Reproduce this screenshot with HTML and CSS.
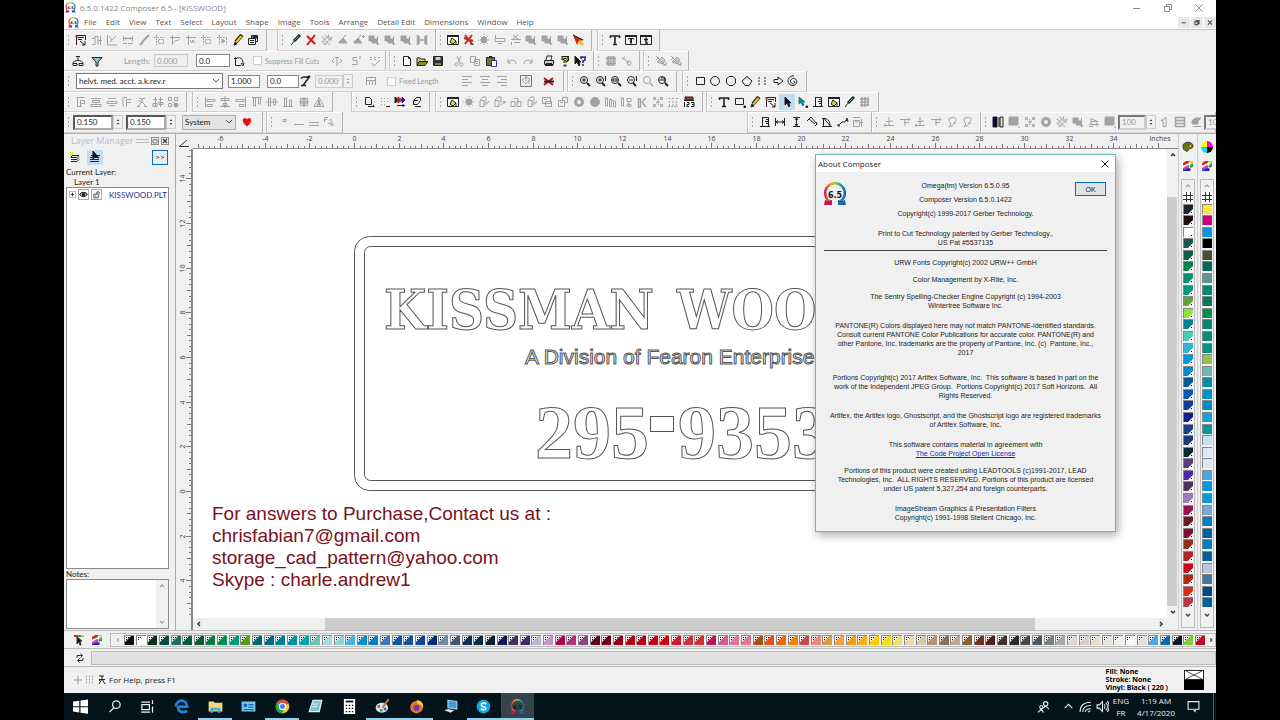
FILE: index.html
```html
<!DOCTYPE html>
<html lang="en">
<head>
    <meta charset="UTF-8">
    <meta name="viewport" content="width=device-width, initial-scale=1.0">
    <title>6.5.0.1422 Composer 6.5 - [KISSWOOD]</title>
    <link rel="stylesheet" href="styles.css">
</head>
<body>
    <svg class="defs" aria-hidden="true">
        <defs>
            <linearGradient id="rainbow" x1="0" x2="1" y1="0" y2="0">
                <stop offset="0" stop-color="#d81b60"/>
                <stop offset="0.25" stop-color="#f39c12"/>
                <stop offset="0.5" stop-color="#9ccc3c"/>
                <stop offset="0.75" stop-color="#26a69a"/>
                <stop offset="1" stop-color="#1565c0"/>
            </linearGradient>
            <symbol id="omega" viewBox="0 0 24 24">
                <path d="M7 19.500A9.800 9.800 0 1 1 17 19.500" fill="none" stroke="url(#rainbow)" stroke-width="2.500"/>
                <path d="M1 23l1-5 3 1 4-1v5z" fill="#c2185b"/>
                <path d="M23 23l-1-5-3 1-4-1v5z" fill="#1e62b0"/>
                <text x="12" y="16" text-anchor="middle" class="omega-text">6.5</text>
            </symbol>
        </defs>
    </svg>

    <div class="app">
        <header class="title-bar">
            <svg class="app-icon"><use href="#omega"/></svg>
            <span class="title">6.5.0.1422 Composer 6.5 - [KISSWOOD]</span>
            <div class="window-buttons">
                <button aria-label="Minimize" data-icon="min"></button>
                <button aria-label="Restore" data-icon="restore"></button>
                <button aria-label="Close" data-icon="close"></button>
            </div>
        </header>

        <nav class="menu-bar">
            <svg class="app-icon"><use href="#omega"/></svg>
            <button>File</button>
            <button>Edit</button>
            <button>View</button>
            <button>Text</button>
            <button>Select</button>
            <button>Layout</button>
            <button>Shape</button>
            <button>Image</button>
            <button>Tools</button>
            <button>Arrange</button>
            <button>Detail Edit</button>
            <button>Dimensions</button>
            <button>Window</button>
            <button>Help</button>
            <div class="child-buttons">
                <button aria-label="Minimize document" data-icon="min"></button>
                <button aria-label="Restore document" data-icon="restore"></button>
                <button aria-label="Close document" data-icon="close"></button>
            </div>
        </nav>

        <div class="toolbars">
            <div class="row">
                <div class="band band-select"><div class="tools" data-icons="flag -nodes -edit -dim -brush -crop -curve -wave -crop -play pencil props"></div></div>
                <div class="band band-fill gap-10"><div class="tools" data-icons="pen cross -hatch -bucket -bucket2 -stack -stack -stack -mirror"></div></div>
                <div class="band band-image"><div class="tools" data-icons="paint redx -burst -plot -plotx -stack -stack -stack wand"></div></div>
                <div class="band band-text gap-5"><div class="tools" data-icons="bigT boxT boxt"></div></div>
            </div>
            <div class="row">
                <div class="band band-length no-grip">
                    <div class="tools tools-wide" data-icons="weld funnel"></div>
                    <label class="off length-label" for="length">Length:</label>
                    <input class="field" id="length" value="0.000" disabled>
                    <input class="field" value="0.0" aria-label="Angle">
                    <div class="tools" data-icons="rotate"></div>
                    <label class="check off"><input type="checkbox"> Suppress Fill Cuts</label>
                    <div class="tools tools-wide" data-icons="-weed -snap -abc"></div>
                </div>
                <div class="band band-file gap-3"><div class="tools" data-icons="page open save | -cut -copy paste | -undo -redo | print help what"></div></div>
                <div class="band band-grid"><div class="tools" data-icons="-grid -key"></div></div>
                <div class="band band-ungroup gap-3"><div class="tools" data-icons="-hammer -hammer"></div></div>
            </div>
            <div class="row">
                <div class="band band-font">
                    <select class="font-name" aria-label="Font"><option>helvt. med. acct. a.k.rev.r</option></select>
                    <input class="field field-size" value="1.000" aria-label="Height">
                    <input class="field field-size" value="0.0" aria-label="Slant">
                    <div class="tools" data-icons="slant"></div>
                    <input class="field field-kern" value="0.000" aria-label="Kerning" disabled><span class="spin off" data-icon="spin"></span>
                    <div class="tools tools-hh" data-icons="-hh"></div>
                    <label class="check off"><input type="checkbox"> Fixed Length</label>
                    <div class="tools tools-align" data-icons="-left -center -right | -pot | redh"></div>
                </div>
                <div class="band band-zoom gap-3"><div class="tools" data-icons="zin zone zout zminus -zoom zpage"></div></div>
                <div class="band band-shape gap-5"><div class="tools" data-icons="rect circle octagon diamond dots arrow spiral"></div></div>
            </div>
            <div class="row">
                <div class="band band-order"><div class="tools" data-icons="-P -bars -bars2 -F -node3 -align2 -blocks"></div></div>
                <div class="band band-align gap-5"><div class="tools" data-icons="-alL -alC -alR -alT -alM -alB -alG -tri"></div></div>
                <div class="band band-copy gap-18"><div class="tools" data-icons="docdown -griddot rgb clock"></div></div>
                <div class="band band-effects gap-5"><div class="tools" data-icons="paint -burst -cube -cube2 -cube3 -cube -boxes -boxes2 -ring -disc -doors -doors2 -kk -net -net2 calc123"></div></div>
                <div class="band band-main gap-3"><div class="tools" data-icons="bigT rectd pencil flag *cursor tealcur ruler paint pen -gridd"></div></div>
            </div>
            <div class="row">
                <div class="band band-nudge">
                    <input class="field sunken" value="0.150" aria-label="Nudge X"><span class="spin" data-icon="spin"></span>
                    <input class="field sunken" value="0.150" aria-label="Nudge Y"><span class="spin" data-icon="spin"></span>
                    <select class="units" aria-label="Units"><option>System</option></select>
                    <div class="tools" data-icons="heart"></div>
                </div>
                <div class="band band-lines gap-3"><div class="tools" data-icons="-dot -line1 -line2 -frac"></div></div>
                <div class="band band-dim push"><div class="tools" data-icons="ruler dimh dimv dimd dima leader -dimr"></div></div>
                <div class="band band-path"><div class="tools" data-icons="-p1 -p2 -p1 -p2 -lobe -lobe"></div></div>
                <div class="band band-color">
                    <div class="tools" data-icons="grad -sq -net -ring -hatch -stack -cut2 -sq"></div>
                    <input class="field sunken field-100" value="100" aria-label="Opacity" disabled><span class="spin" data-icon="spin"></span>
                    <div class="tools" data-icons="-mirror2 -list -erase"></div>
                    <input class="field sunken field-100" value="100" aria-label="Scale" disabled>
                </div>
            </div>
        </div>

        <main class="main">
            <aside class="layer-panel">
                <div class="panel-title">
                    <span>Layer Manager</span>
                    <i class="drag-lines"></i>
                    <button aria-label="Dock" data-icon="dock"></button>
                    <button aria-label="Close panel" data-icon="closeb"></button>
                </div>
                <div class="panel-tools">
                    <button aria-label="New layer" data-icon="layers"></button>
                    <button class="active" aria-label="Select layer" data-icon="layercur"></button>
                    <button class="more">&gt;&gt;</button>
                </div>
                <div class="current-layer">Current Layer:</div>
                <div class="layer-name">Layer 1</div>
                <div class="tree">
                    <div class="tree-row">
                        <span class="plus" data-icon="plus"></span>
                        <span class="cell" data-icon="eye"></span>
                        <span class="cell" data-icon="lock"></span>
                        <span class="file">KISSWOOD.PLT</span>
                    </div>
                </div>
                <label class="notes-label" for="notes">Notes:</label>
                <div class="notes">
                    <textarea id="notes"></textarea>
                    <div class="notes-scroll"><span data-icon="up"></span><span data-icon="down"></span></div>
                </div>
            </aside>

            <section class="workspace">
                <div class="corner" data-icon="corner"></div>
                <svg class="ruler-h" id="ruler-h"></svg>
                <svg class="ruler-v" id="ruler-v"></svg>
                <div class="canvas">
                    <svg class="drawing">
                        <g class="outline">
                            <rect x="161.500" y="87.500" width="700" height="254" rx="15"/>
                            <rect x="171.500" y="97.500" width="680" height="234" rx="6"/>
                            <text class="sign-name" x="191" y="180">KISSMAN</text>
                            <text class="sign-name" x="484" y="180">WOO</text>
                            <text class="sign-sub" x="332" y="215">A Division of Fearon Enterprise</text>
                            <text class="sign-phone" x="342" y="309">295</text>
                            <rect x="457.500" y="267.500" width="23" height="15"/>
                            <text class="sign-phone" x="485" y="309">9353</text>
                        </g>
                    </svg>
                    <p class="contact">For answers to Purchase,Contact us at :<br>chrisfabian7@gmail.com<br>storage_cad_pattern@yahoo.com<br>Skype : charle.andrew1</p>
                </div>
                <div class="scroll-v"><span data-icon="up"></span><i class="thumb"></i><span data-icon="down"></span></div>
                <div class="scroll-h"><span data-icon="lt"></span><i class="thumb"></i><span data-icon="gt"></span></div>
            </section>

            <div class="palette">
                <span class="palette-icon" data-icon="palette"></span>
                <span class="palette-icon" data-icon="rainbow"></span>
                <div class="swatches-v" id="vinyl"></div>
            </div>
            <div class="palette">
                <span class="palette-icon" data-icon="cmyk"></span>
                <span class="palette-icon" data-icon="rainbow"></span>
                <div class="swatches-v plain" id="process"></div>
            </div>
        </main>

        <div class="color-bar">
            <span data-icon="tcur"></span>
            <span data-icon="rainbow"></span>
            <div class="swatches-h" id="colors"></div>
        </div>
        <div class="command-bar">
            <button aria-label="Refresh" data-icon="refresh"></button>
            <input class="command" aria-label="Command" disabled>
        </div>
        <footer class="status-bar">
            <span class="off" data-icon="cross2"></span>
            <span class="off" data-icon="dots9"></span>
            <span data-icon="man"></span>
            <span class="hint">For Help, press F1</span>
            <div class="fill-info">Fill: None<br>Stroke: None<br>Vinyl: Black ( 220 )</div>
            <div class="fill-boxes"><svg viewBox="0 0 20 10"><path d="M0 0l20 10M20 0L0 10" stroke="#222" fill="none"/></svg><i></i></div>
        </footer>

        <div class="taskbar">
            <div class="task-buttons" id="tasks"></div>
            <div class="tray">
                <span data-icon="people"></span>
                <span data-icon="caret"></span>
                <span data-icon="wifi"></span>
                <span data-icon="volume"></span>
                <div class="tray-text">ENG<br>FR</div>
                <div class="tray-text clock">1:19 AM<br>4/17/2020</div>
                <span data-icon="note"></span>
                <i class="peek"></i>
            </div>
        </div>

        <div class="dialog" role="dialog" aria-label="About Composer">
            <div class="dialog-header">
                <h2>About Composer</h2>
                <button aria-label="Close dialog" data-icon="close"></button>
            </div>
            <div class="dialog-content">
                <svg class="dialog-logo"><use href="#omega"/></svg>
                <button class="ok">OK</button>
                <p>Omega(tm) Version 6.5.0.95</p>
                <p class="sp-5">Composer Version 6.5.0.1422</p>
                <p class="sp-5">Copyright(c) 1999-2017 Gerber Technology.</p>
                <p class="sp-11">Print to Cut Technology patented by Gerber Technology.,<br>US Pat #5537135</p>
                <hr>
                <p>URW Fonts Copyright(c) 2002 URW++ GmbH</p>
                <p class="sp-8">Color Management by X-Rite, Inc.</p>
                <p class="sp-8">The Sentry Spelling-Checker Engine Copyright (c) 1994-2003<br>Wintertree Software Inc.</p>
                <p class="sp-11">PANTONE(R) Colors displayed here may not match PANTONE-identified standards.<br>Consult current PANTONE Color Publications for accurate color. PANTONE(R) and<br>other Pantone, Inc. trademarks are the property of Pantone, Inc. (c)&nbsp; Pantone, Inc.,<br>2017</p>
                <p class="sp-16">Portions Copyright(c) 2017 Artifex Software, Inc.&nbsp; This software is based in part on the<br>work of the Independent JPEG Group.&nbsp; Portions Copyright(c) 2017 Soft Horizons.&nbsp; All<br>Rights Reserved.</p>
                <p class="sp-11">Artifex, the Artifex logo, Ghostscript, and the Ghostscript logo are registered trademarks<br>of Artifex Software, Inc.</p>
                <p class="sp-11">This software contains material in agreement with</p>
                <p><a href="#">The Code Project Open License</a></p>
                <p class="sp-8">Portions of this product were created using LEADTOOLS (c)1991-2017, LEAD<br>Technologies, Inc.&nbsp; ALL RIGHTS RESERVED. Portions of this product are licensed<br>under US patent 5,327,254 and foreign counterparts.</p>
                <p class="sp-11">ImageStream Graphics &amp; Presentation Filters<br>Copyright(c) 1991-1998 Stellent Chicago, Inc.</p>
            </div>
        </div>
    </div>

    <script src="script.js"></script>
</body>
</html>
```
FILE: styles.css
```css
* {
    box-sizing: border-box;
}
body {
    margin: 0;
    background: #000;
    font-family: "Open Sans", "Noto Sans", sans-serif;
    font-size: 8px;
    line-height: 10px;
    color: #333;
}
button, input, select, textarea {
    font: inherit;
    color: inherit;
    margin: 0;
    padding: 0;
    border: 0;
    border-radius: 0;
    background: none;
}
p, h2 {
    margin: 0;
    font-weight: normal;
}
svg {
    display: block;
}
.defs {
    position: absolute;
    width: 0;
    height: 0;
}
.omega-text {
    font: bold 8px "DejaVu Sans", sans-serif;
    fill: #111;
}
.icon {
    width: 12px;
    height: 12px;
    fill: none;
    stroke: currentColor;
}
.app {
    position: relative;
    display: flex;
    flex-direction: column;
    width: 90%;
    height: 100vh;
    margin: 0 auto;
    overflow: hidden;
    background: #f0f0f0;
}
.app-icon {
    width: 11px;
    height: 11px;
}

/* title and menu */
.title-bar {
    display: flex;
    align-items: center;
    height: 15px;
    padding-left: 1px;
    gap: 4px;
    background: #fff;
    color: #888;
}
.window-buttons {
    display: flex;
    gap: 19px;
    margin-left: auto;
    padding-right: 11px;
}
.menu-bar {
    display: flex;
    align-items: center;
    height: 15px;
    padding-left: 4px;
    gap: 9px;
    background: #fff;
    border-bottom: 1px solid #c4c4c4;
    color: #555;
}
.menu-bar .app-icon {
    margin-right: -4px;
}
.child-buttons {
    display: flex;
    gap: 1px;
    margin-left: auto;
}
.child-buttons button {
    padding: 0;
    background: #e6e8ea;
}
.child-buttons .icon {
    width: 12px;
    height: 11px;
    padding: 2px;
    stroke-width: 2;
}

/* toolbars */
.row {
    display: flex;
    height: 21px;
    overflow: hidden;
}
.row:nth-child(even) {
    height: 20px;
}
.band {
    display: flex;
    flex: none;
    align-items: center;
    padding: 0 5px 0 9px;
    border-right: 1px solid #b4b4b4;
    border-bottom: 1px solid #d0d0d0;
    box-shadow: inset 1px 1px #fff;
    background: radial-gradient(circle, #aaa 1px, transparent 1px) 3px 4px / 3px 4px no-repeat,
        radial-gradient(circle, #aaa 1px, transparent 1px) 3px 8px / 3px 4px no-repeat,
        radial-gradient(circle, #aaa 1px, transparent 1px) 3px 12px / 3px 4px no-repeat;
    font-family: Lato, "Liberation Sans", sans-serif;
}
.no-grip {
    background: none;
}
.gap-3 { margin-left: 3px; border-left: 1px solid #c4c4c4; }
.gap-5 { margin-left: 5px; border-left: 1px solid #c4c4c4; }
.gap-10 { margin-left: 10px; border-left: 1px solid #c4c4c4; }
.gap-18 { margin-left: 18px; border-left: 1px solid #c4c4c4; }
.push { margin-left: auto; border-left: 1px solid #c4c4c4; }
.band-select { width: 203px; }
.band-fill { width: 159px; }
.band-image { width: 156px; }
.band-text { width: 63px; }
.band-length { width: 322px; padding-left: 4px; }
.band-file { width: 205px; }
.band-grid { width: 46px; }
.band-ungroup { width: 46px; }
.band-font { width: 500px; padding-left: 12px; }
.band-zoom { width: 110px; }
.band-shape { width: 125px; }
.band-order { width: 123px; }
.band-align { width: 141px; }
.band-copy { width: 79px; }
.band-effects { width: 268px; }
.band-main { width: 173px; }
.band-nudge { width: 199px; }
.band-lines { width: 77px; }
.band-dim { width: 125px; }
.band-path { width: 109px; }
.band-color { width: 235px; padding-right: 0; }
.tools {
    display: flex;
    flex: 1;
}
.tools button {
    display: flex;
    flex: 1;
    align-items: center;
    justify-content: center;
    height: 16px;
    min-width: 12px;
    color: #222;
}
.tools button:disabled {
    color: #a2a2a2;
}
.tools .active, .panel-tools .active {
    background: #c2dcf3;
}
.tools .space {
    width: 6px;
}
.band-length .tools, .band-font .tools, .band-nudge .tools, .band-color .tools {
    flex: none;
}
.band-color .tools button {
    width: 16px;
}
.band-length .tools-wide button {
    width: 19px;
}
.band-length .length-label {
    margin: 0 4px 0 18px;
}
.band-length .field {
    margin-right: 8px;
}
.band-length .field + .tools {
    margin: 0 8px 0 -5px;
}
.band-length .check {
    margin-right: 8px;
}
.off {
    color: #999;
}
.field {
    width: 34px;
    height: 13px;
    padding-left: 2px;
    border: 1px solid #8a8a8a;
    background: #fff;
    color: #222;
}
.field:disabled {
    border-color: #ccc;
    background: #f0f0f0;
    color: #999;
}
.check {
    display: flex;
    align-items: center;
    gap: 3px;
    font-size: 7px;
    white-space: nowrap;
}
.check input {
    appearance: none;
    width: 9px;
    height: 9px;
    border: 1px solid #ccc;
    background: #fff;
}
select {
    appearance: none;
    padding-left: 2px;
    background: #fff url("data:image/svg+xml,%3Csvg xmlns='http://www.w3.org/2000/svg' width='8' height='6'%3E%3Cpath d='M1 1l3 3 3-3' fill='none' stroke='%23555'/%3E%3C/svg%3E") no-repeat right 2px center;
}
.font-name {
    width: 147px;
    height: 16px;
    border: 1px solid #777;
    color: #222;
}
.band-font .field-size {
    width: 32px;
    margin-left: 5px;
}
.band-font .field-size + .field-size {
    margin-left: 7px;
}
.band-font .field-kern {
    width: 28px;
    margin-left: 4px;
}
.spin {
    display: flex;
    flex: none;
    align-items: center;
    justify-content: center;
    width: 10px;
    height: 14px;
    border: 1px solid #ccc;
}
.tools-hh {
    padding: 0 10px 0 12px;
}
.band-font .tools-align {
    flex: 1;
    padding-left: 20px;
}
.sunken {
    width: 40px;
    height: 15px;
    border: 2px inset #aaa;
}
.band-nudge .spin {
    margin-right: 3px;
}
.units {
    width: 54px;
    height: 15px;
    margin: 0 5px 0 3px;
    border: 1px solid #adadad;
    background-color: #e3e3e3;
    color: #222;
}
.field-100 {
    flex: none;
    width: 28px;
    border-color: #aaa;
}

/* middle part */
.main {
    display: flex;
    flex: 1;
    min-height: 0;
    border-top: 1px solid #b4b4b4;
}
.layer-panel {
    display: flex;
    flex-direction: column;
    width: 112px;
    padding: 1px 6px 1px 2px;
    font-family: Lato, "Liberation Sans", sans-serif;
    border-right: 1px solid #aaa;
    color: #222;
}
.panel-title {
    display: flex;
    align-items: center;
    height: 12px;
    padding-left: 5px;
    gap: 2px;
    font-family: "Open Sans", sans-serif;
    font-size: 9px;
    color: #b2c0d2;
    white-space: nowrap;
}
.panel-title button {
    color: #444;
}
.panel-title .icon {
    width: 8px;
    height: 8px;
}
.drag-lines {
    flex: 1;
    height: 4px;
    border: solid #bbb;
    border-width: 1px 0;
}
.panel-tools {
    display: flex;
    align-items: center;
    height: 20px;
    gap: 4px;
    padding: 0 1px;
}
.panel-tools button {
    display: flex;
    align-items: center;
    justify-content: center;
    width: 16px;
    height: 15px;
}
.panel-tools .more {
    margin-left: auto;
    border: 1px solid #0a6cc0;
    background: #e5eef5;
}
.layer-name {
    padding-left: 8px;
}
.tree {
    flex: 1;
    border: 1px solid #8c8c8c;
    background: #fff;
}
.tree-row {
    display: flex;
    align-items: center;
    gap: 1px;
    padding: 1px 2px;
}
.tree-row .plus .icon {
    width: 7px;
    height: 7px;
}
.tree-row .cell {
    margin-left: 1px;
    border: 1px solid #aaa;
}
.tree-row .cell .icon {
    width: 9px;
    height: 9px;
}
.file {
    margin-left: 6px;
    color: #2c2c8c;
}
.notes {
    display: flex;
    height: 50px;
    border: 1px solid #8c8c8c;
    background: #fff;
}
.notes textarea {
    flex: 1;
    min-width: 0;
    resize: none;
}
.notes-scroll {
    display: flex;
    flex-direction: column;
    justify-content: space-between;
    background: #f0f0f0;
    color: #aaa;
}
.workspace {
    display: grid;
    flex: 1;
    min-width: 0;
    grid-template: 15px 1fr 12px / 17px 1fr 11px;
}
.corner {
    padding: 3px 2px;
}
.ruler-h {
    grid-column: 2 / 4;
    width: 100%;
    height: 16px;
}
.ruler-v {
    grid-row: 2 / 4;
    width: 17px;
    height: 100%;
}
.ruler-h text, .ruler-v text {
    font-size: 7px;
    fill: #444;
    text-anchor: middle;
}
.ruler-h path, .ruler-v path {
    stroke: #777;
}
.ruler-h .edge, .ruler-v .edge {
    stroke: #888;
    stroke-width: 2;
}
.canvas {
    position: relative;
    overflow: hidden;
    background: #fff;
}
.drawing {
    width: 100%;
    height: 100%;
}
.outline {
    fill: none;
    stroke: #555;
    stroke-width: 1;
}
.sign-name {
    font: bold 54px "DejaVu Serif Condensed", "Liberation Serif", serif;
}
.sign-sub {
    font: 21px "Liberation Sans", sans-serif;
}
.sign-phone {
    font: bold 76px "Liberation Serif", serif;
}
.contact {
    position: absolute;
    left: 19px;
    top: 354px;
    font: 19px/22px "Liberation Sans", sans-serif;
    color: #7a1020;
}
.scroll-v {
    display: flex;
    flex-direction: column;
    background: #f0f0f0;
}
.scroll-v .thumb {
    flex: 1;
    margin: 36px 1px 0 0;
    background: #cdcdcd;
}
.scroll-h {
    display: flex;
    background: #f0f0f0;
}
.scroll-h .thumb {
    flex: 1;
    margin: 0 120px;
    background: #cdcdcd;
}
.palette {
    display: flex;
    flex-direction: column;
    align-items: center;
    width: 19px;
    padding-top: 7px;
    border-left: 1px solid #ccc;
}
.palette-icon {
    flex: none;
    height: 19px;
}
.swatches-v {
    display: flex;
    flex: 1;
    flex-direction: column;
    align-items: center;
    width: 14px;
    min-height: 0;
    margin-bottom: 2px;
    padding-bottom: 6px;
    border: 1px solid #bbb;
}
.swatches-v span, .swatches-h span {
    flex: none;
    color: #444;
}
.swatches-v span:first-child, .swatches-h span:first-child {
    color: #aaa;
}
.swatch {
    flex: 1;
    width: 10px;
    min-width: 0;
    min-height: 0;
}
.swatch svg {
    width: 10px;
    height: 10px;
}

/* bottom bars */
.color-bar {
    display: flex;
    align-items: center;
    height: 19px;
    padding-left: 9px;
    gap: 6px;
    border-top: 1px solid #bbb;
    border-bottom: 1px solid #bbb;
}
.swatches-h {
    display: flex;
    flex: 1;
    align-items: center;
    height: 14px;
    margin-left: 1px;
    padding-left: 2px;
    border: 1px solid #bbb;
}
.swatches-h .icon {
    width: 10px;
}
.swatches-h .swatch {
    padding-left: 1px;
}
.command-bar {
    display: flex;
    align-items: center;
    height: 18px;
    padding-left: 10px;
    gap: 5px;
    border-bottom: 1px solid #bbb;
}
.command {
    flex: 1;
    height: 14px;
    border: 1px solid #bbb;
    background: #e1e1e1;
}
.status-bar {
    display: flex;
    align-items: center;
    height: 26px;
    padding: 0 12px 0 8px;
    color: #222;
}
.status-bar .hint {
    margin-left: 1px;
}
.fill-info {
    margin-left: auto;
    font-weight: bold;
    font-size: 7px;
    line-height: 8px;
    color: #000;
}
.fill-boxes {
    width: 20px;
    margin-left: 16px;
}
.fill-boxes svg {
    width: 20px;
    height: 10px;
    border: 1px solid #222;
    background: #fff;
}
.fill-boxes i {
    display: block;
    height: 10px;
    background: #000;
}
.taskbar {
    display: flex;
    height: 27px;
    background: #04141a;
    color: #e8eef0;
}
.task-buttons {
    display: flex;
    width: 470px;
}
.task-buttons button {
    display: flex;
    flex: 1;
    align-items: center;
    justify-content: center;
}
.task-buttons .open {
    box-shadow: inset 0 -2px #8fd0ea;
}
.task-buttons .current {
    background: #35444a;
}
.task-buttons .icon {
    width: 15px;
    height: 15px;
}
.tray {
    display: flex;
    align-items: center;
    margin-left: auto;
    gap: 4px;
}
.tray .icon {
    width: 13px;
    height: 13px;
}
.tray span:first-child {
    margin-right: 8px;
}
.tray-text {
    font-size: 8px;
    line-height: 12px;
    text-align: center;
}
.clock {
    margin: 0 8px 0 4px;
}
.peek {
    width: 1px;
    height: 27px;
    margin: 0 2px 0 9px;
    background: #56646a;
}

/* about box */
.dialog {
    position: absolute;
    top: 154px;
    right: 100px;
    width: 301px;
    border: 1px solid #6cb6b8;
    background: #f0f0f0;
    box-shadow: 2px 3px 9px rgba(0, 0, 0, 0.35);
    color: #222;
}
.dialog-header {
    display: flex;
    align-items: center;
    justify-content: space-between;
    height: 17px;
    padding: 0 4px 0 2px;
    background: #fff;
}
.dialog-header h2 {
    font-size: 8px;
}
.dialog-content {
    position: relative;
    padding: 9px 8px;
    font-family: "Liberation Sans", sans-serif;
    font-size: 7px;
    line-height: 9px;
    text-align: center;
    white-space: nowrap;
}
.dialog-logo {
    position: absolute;
    left: 7px;
    top: 10px;
    width: 24px;
    height: 24px;
}
.ok {
    position: absolute;
    right: 9px;
    top: 10px;
    width: 31px;
    height: 14px;
    border: 1px solid #0a6cd0;
    background: #e1e1e1;
}
.dialog hr {
    height: 1px;
    margin: 3px 0 7px;
    border: 0;
    background: #444;
}
.dialog a {
    color: #1a1ab8;
}
.sp-5 { padding-top: 5px; }
.sp-8 { padding-top: 8px; }
.sp-11 { padding-top: 11px; }
.sp-16 { padding-top: 16px; }
```
FILE: script.js
```js
// all icons are drawn on a 12x12 grid
const icons = {
    min: '<path d="M2 6.500h7"/>',
    restore: '<path d="M2.500 4.500h5v5h-5zM4.500 4.500v-2h5v5h-2"/>',
    close: '<path d="M2.500 2.500l7 7M9.500 2.500l-7 7"/>',
    closeb: '<path d="M.5.500h11v11H.5z"/><path d="M3 3l6 6M9 3l-6 6" stroke-width="2"/>',
    dock: '<path d="M.5.500h11v11H.5zM3 4h6v5H3z"/>',
    flag: '<path d="M1.500 11V1.500h9V6M3 3.500h6M3 5.500h4"/><path d="M0 2h3M1 4h2" stroke="#c22"/><path d="M5 7l5 4M10 7v4H7" />',
    nodes: '<path d="M1 10.500h3V2.500h3v8M7 6.500h4M9.500 2v9M1 4.500h3"/>',
    edit: '<path d="M1.500 1v10H11M4 8l6-6M3 2l3 4"/>',
    dim: '<path d="M1.500 2v5M10.500 2v5M2 4.500h8M4 3v3M8 3v3M1 9.500h4M6 9.500h5"/>',
    brush: '<path d="M11 1L6 6" stroke-width="2"/><path d="M6 6l-3 4-1 1" stroke-width="2"/>',
    crop: '<path d="M1 3.500h10M3.500 1v10M5.500 5.500h5v4h-5z" stroke-dasharray="2 1"/>',
    curve: '<path d="M1 3.500h10M3.500 1v10M5 9c0-4 4-1 5-4"/>',
    wave: '<path d="M1 3.500h10M3.500 1v10M5 6l2 3 1-3 2 3"/>',
    play: '<path d="M1 3.500h10M3.500 1v10M10.500 4v7" stroke-dasharray="2 1"/><path d="M6 5l3 2-3 2z" fill="currentColor"/>',
    pencil: '<path d="M10 1L4 8" stroke="#222" stroke-width="4"/><path d="M9.500 2L4.500 8" stroke="#e8c820" stroke-width="2"/><path d="M2 11l1-3 2 2z" fill="#222"/>',
    props: '<path d="M1.500 4.500h7v6h-7zM3 6.500h4M3 8.500h4M4.500 4V1.500h6v6H9"/><path d="M6 2h4v2H6z" fill="currentColor"/>',
    pen: '<path d="M11 1L5 7" stroke="#222" stroke-width="3"/><path d="M10 2L6 6" stroke="#5a5" /><path d="M6 6l-4 5" stroke="#222"/>',
    cross: '<path d="M2 2l8 8M10 1L2 11" stroke="#d01818" stroke-width="2"/>',
    hatch: '<path d="M1 3l8 8M4 1l7 7M1 7l4 4M8 1L1 8M11 3l-8 8M7 2l4 4" stroke-dasharray="1 1" stroke-width="1.500"/>',
    bucket: '<path d="M2 8l4-4 4 5H2z" fill="currentColor"/><path d="M5 5l4-4"/>',
    bucket2: '<path d="M1 8l4-4 4 5H1z" fill="currentColor"/><path d="M5 5l3-4M9 2.500h3M10.500 1v3"/>',
    stack: '<path d="M1 2h5v5H1zM4 5h5v4H4z" fill="currentColor"/><path d="M9.500 2v8M8 9l2 2 1-2"/>',
    mirror: '<path d="M1.500 1v10M10.500 1v10M3 2v8M9 2v8M4 6h4" stroke-width="1.500"/>',
    paint: '<path d="M.5 1.500h11v9H.5z" fill="#fff"/><path d="M0 2h12" stroke-width="2"/><path d="M3 8l2-4 4 3-3 3z" fill="#d8d840"/><path d="M9 7v3"/>',
    redx: '<path d="M2 1l7 9M9 1L2 10M1 4l9 3" stroke="#c22" stroke-width="2"/><path d="M7 10h3v1" stroke="#222"/>',
    burst: '<path d="M6 0v12M0 6h12M2 2l8 8M10 2l-8 8" stroke-dasharray="1 1"/><circle cx="6" cy="6" r="3" fill="currentColor"/>',
    plot: '<path d="M1 4.500h10v3H1zM1.500 1v3M4 9.500h4"/>',
    plotx: '<path d="M1 5.500h10M3 1l5 4M8 1L3 5M1.500 8v3M4 8.500h6"/>',
    wand: '<path d="M1 1l4 10 2-4 5-1z" fill="#d42010" stroke="none"/><path d="M1 1l10 5" stroke="#222"/><path d="M7 7l4 4" stroke="#e8c020" stroke-width="3"/>',
    bigT: '<path d="M1.500 4V2h9v2M6 2v8.500M4 10.500h4" stroke-width="1.600"/>',
    boxT: '<path d="M.5 1.500h11v9H.5zM3.500 5.500V4.500h5v1M5 9h2"/><path d="M0 2h12M6 4v5" stroke-width="2"/>',
    boxt: '<path d="M.5 1.500h11v9H.5z"/><path d="M0 2h12" stroke-width="2"/><path d="M6 3.500V9h2M4 5.500h4" stroke-width="1.500"/>',
    weld: '<path d="M6 1v4M4 1.500h4M1 8.500c0-4 10-4 10 0M1 8.500h4v2H1zM7 8.500h4v2H7z"/>',
    funnel: '<path d="M1 2.500h10L7 7v4H5V7z" fill="#8cc"/><path d="M1 2.500h10"/>',
    rotate: '<path d="M1 3.500h3M2.500 2v8.500H8M4 3c4-1 6 1 6 6M8 8l2 3 1-3"/>',
    weed: '<path d="M3 4L1 6l2 2M9 4l2 2-2 2M6 2v7M4 2.500h4M5 10h2"/>',
    snap: '<path d="M7 2.500H3v3h4v4H2M10 1v3"/>',
    abc: '<path d="M1 2.500h2M5 2.500h2M9 2.500h2M1 4.500h2M5 4.500h2M3 8l2 3 6-6"/>',
    page: '<path d="M2.500 1.500h5l2 2v7h-7zM7.500 1.500v2h2" fill="#fff"/>',
    open: '<path d="M1 10V3h3l1 1h4v2" fill="#d8d860"/><path d="M1 10.500l2-4h9l-3 4z" fill="#8a8a20"/>',
    save: '<path d="M1.500 1.500h9v9h-9z" fill="#333"/><path d="M3.500 2h5v3h-5z" fill="#ccc" stroke="none"/><path d="M3 9h6" stroke="#8a8a20" stroke-width="2"/>',
    cut: '<path d="M4 1l3 7M8 1L5 8"/><circle cx="3.500" cy="9.500" r="1.500"/><circle cx="8.500" cy="9.500" r="1.500"/>',
    copy: '<path d="M1.500 1.500h5v6h-5zM5.500 4.500h5v6h-5zM7 6.500h2M7 8.500h2"/>',
    paste: '<path d="M1.500 2.500h8v8h-8z" fill="#77733a"/><path d="M4 2h3" stroke-width="2"/><path d="M6.500 5.500h5v6h-5z" fill="#fff" stroke="#338"/>',
    undo: '<path d="M2 4v4h3M2 8c2-4 8-4 8 1"/>',
    redo: '<path d="M10 4v4H7M10 8c-2-4-8-4-8 1"/>',
    print: '<path d="M1.500 5.500h9v4h-9z" fill="#ccc"/><path d="M3 5l1-4h5L8 5M3 8.500h6M2 10.500h8"/>',
    help: '<path d="M4 5V2.500h4.500V5L6 6.500V8M6 9.500v2" stroke="#222" stroke-width="3"/><path d="M4 4V2.500h4V5L6 6.500V8M6 9.500v1" stroke="#e0d830"/>',
    what: '<path d="M1 1v8l2-2 2 4 1-1-1-3h2z" fill="#111"/><path d="M7 4V2h4v3L9 6v2M9 9v2" stroke="#228" stroke-width="1.500"/>',
    grid: '<path d="M2 2h8v8H2z" fill="currentColor" fill-opacity=".5"/><path d="M1 3.500h10M1 8.500h10M3.500 1v10M8.500 1v10M6 1v10"/>',
    key: '<path d="M2 2l7 6M2 5l3-3"/><circle cx="9" cy="8" r="2"/>',
    hammer: '<path d="M2 7l5-5 3 3-2 4z" fill="currentColor" fill-opacity=".5"/><path d="M1 1l10 10M1 5l3-3M8 10h3V7"/>',
    slant: '<path d="M2 3.500C5 0 6 4 11 1L4 10.500M2 10.500h5" stroke-width="1.500"/>',
    hh: '<path d="M1.500 2v8M10.500 2v8M4.500 5v5M7.500 5v5M2 5.500h8M1 2.500h10"/>',
    left: '<path d="M1 1.500h10M1 4.500h6M1 7.500h10M1 10.500h6"/>',
    center: '<path d="M1 1.500h10M3 4.500h6M1 7.500h10M3 10.500h6"/>',
    right: '<path d="M1 1.500h10M5 4.500h6M1 7.500h10M5 10.500h6"/>',
    pot: '<path d="M.5.500h11v11H.5z" stroke="#777"/><path d="M2 5l4 4 4-5-4-2zM6 1v5M9 5v4"/>',
    redh: '<path d="M1 3l9 7M10 3L1 10" stroke="#c11" stroke-width="2"/><path d="M1 6.500h10" stroke="#222" stroke-width="2"/>',
    zoom: '<circle cx="5" cy="5" r="3.500"/><path d="M8 8l3 3" stroke-width="1.600"/>',
    zin: '<circle cx="5" cy="5" r="3.500"/><path d="M8 8l3 3" stroke-width="2"/><path d="M3 5h4M5 3v4"/>',
    zone: '<circle cx="5" cy="5" r="3.500"/><path d="M7 8l3 3" stroke-width="2"/><path d="M3 5h4M5 3v4M10.500 1v5"/>',
    zout: '<circle cx="5" cy="5" r="3.500"/><path d="M8 8l3 3" stroke-width="2"/><path d="M3 4h4v2H3z"/>',
    zminus: '<circle cx="5" cy="5" r="3.500"/><path d="M7 8l3 3" stroke-width="2"/><path d="M3 5h4M10.500 1v5"/>',
    zpage: '<circle cx="5" cy="5" r="3.500"/><path d="M8 8l3 3" stroke-width="2"/><path d="M2 5h6M4 3h4v4"/>',
    rect: '<path d="M2.500 2.500h8v7h-8z"/>',
    circle: '<circle cx="6" cy="6" r="4.500"/>',
    octagon: '<path d="M4 1.500h4L10.500 4v4L8 10.500H4L1.500 8V4z"/>',
    diamond: '<path d="M6 1.500L11 6l-3 4.500H4L1 6z"/>',
    dots: '<path d="M2 3h2M8 3h2M2 6h2M8 6h2M2 9h2M8 9h2"/>',
    arrow: '<path d="M2 4.500h4V2l5 4-5 4V7.500H2z"/>',
    spiral: '<path d="M6.500 6.500c0-1 2 0 1 1.500S3.500 8.500 3.500 6 7 2.500 9 4.500s0 6-3 6-5-2-5-5S4 .8 7 .8"/>',
    P: '<path d="M2.500 11V1.500h7M5.500 11V4.500h4v3h-4M2 10.500h5"/>',
    F: '<path d="M2 1.500v9M5.500 11V3.500h5M6 6.500h4M3 1.500h3"/>',
    bars: '<path d="M1 2.500h10M2.500 4.500h7v2h-7zM1 8.500h10v2H1z"/>',
    bars2: '<path d="M2 2.500h8M1 5.500h10v2H1zM3 9.500h6"/>',
    node3: '<path d="M3 2.500h6M6 3v4M2 10l4-4 4 4M1 10.500h3M8 10.500h3M2 5h3"/>',
    align2: '<path d="M3.500 1v10M8.500 1v10M1 3.500h4M7 3.500h4M1 7.500h4v3H1zM7 6.500h4v2H7z"/>',
    blocks: '<path d="M1.500 1.500h3v3h-3zM7.500 1.500h3v3h-3zM1.500 7.500h3v3h-3zM6 6l4 4"/><circle cx="9" cy="9" r="2" fill="currentColor"/>',
    alL: '<path d="M1.500 1v10M3 3.500h8v2H3zM3 8.500h5v2H3z"/>',
    alC: '<path d="M6 0v12M2 2.500h8v2H2zM4 7.500h4v2H4zM1 10.500h10"/>',
    alR: '<path d="M10.500 1v10M1 3.500h8v2H1zM4 8.500h5v2H4z"/>',
    alT: '<path d="M1 1.500h10M2.500 2v8h2V2M7.500 2v6h2V2"/>',
    alM: '<path d="M0 6h12M2.500 2v8h2V2zM7.500 3v6h2V3z"/>',
    alB: '<path d="M1 10.500h10M2.500 10V2h2v8M7.500 10V4h2v6"/>',
    alG: '<path d="M1 6h10M6 1v10M2.500 2.500h7v7h-7zM4 4h4v4H4z"/>',
    tri: '<path d="M6 1.500l5 9H1z"/><path d="M6 4v4M4 8.500h4" stroke-width="2"/>',
    docdown: '<path d="M2.500 1.500h4l2 2v5h-6zM5 10.500h6M10 9l1.500 1.500"/>',
    griddot: '<path d="M2 2.500h8M2 5.500h8M2 8.500h6" stroke-dasharray="1 2"/><path d="M7 10.500h4" stroke="#222"/>',
    rgb: '<path d="M1 1l4 3-4 3z" fill="#222"/><path d="M4 1l4 3-4 3z" fill="#b22" stroke="#b22"/><path d="M8 1l3 3-3 3z" fill="#22a" stroke="#22a"/><path d="M3 9.500h8M9 8v3"/>',
    clock: '<path d="M3.500 4.500l3-3h4v3l-3 4h-4zM4 4.500h4M5 10.500h6"/>',
    cube: '<path d="M2 4.500h4v6H2zM2 4l3-3h3v6L6 9M8 9l3-4"/>',
    cube2: '<path d="M1 4.500h4v6H1zM1 4l3-3h3v6M7 9l4-3M9 5.500h2v2"/>',
    cube3: '<path d="M1 5.500h4v5H1zM4 2.500h4v5M7 5.500h4v5H7z"/>',
    boxes: '<path d="M1.500 1.500h8v6h-8zM4.500 5.500h6v5h-6zM3 3.500h3"/>',
    boxes2: '<path d="M1.500 4.500h6v6h-6zM5.500 4V1.500h5v5H8M3 6.500h3"/>',
    ring: '<circle cx="6" cy="6" r="3.500" stroke-width="3"/>',
    disc: '<circle cx="6" cy="6" r="4.500" fill="currentColor"/>',
    doors: '<path d="M1.500 2v8h2V2zM5.500 3.500h2v7h-2zM6 2l4 4M9.500 5v6h2V5z"/>',
    doors2: '<path d="M1.500 2v8h2V2zM6.500 10.500l3-5M7 2.500h4v3H7zM8 8.500h3v2H8z"/>',
    kk: '<path d="M2.500 3v8h2V3zM10 2L6 6l4 5" stroke-width="1.400"/>',
    net: '<path d="M1.500 1.500h2v2h-2zM8.500 1.500h2v2h-2zM1.500 8.500h2v2h-2zM8.500 8.500h2v2h-2zM4 6h4M6 3v6"/>',
    net2: '<path d="M1.500 2.500h2M5 2.500h2M9 2.500h2M2.500 5v5M6 5v5M9.500 5v5M1 10.500h10" stroke-dasharray="2 1"/>',
    calc123: '<path d="M2 4V1h8v3z" fill="#b33"/><path d="M1.500 6v5M4 6.500h2v2H4v2h2M8 6.500h3v4H8M9 8.500h2" /><path d="M1 4.500h10"/>',
    rectd: '<path d="M1.500 2.500h8v6h-8z"/><path d="M10 10h1.500v1.500H10z" fill="currentColor"/>',
    cursor: '<path d="M4 1v8l2-2 2 4 1-1-1.500-3H10z" fill="#111"/>',
    tealcur: '<path d="M3 1v7l2-1.500L7 10l1-1-1.500-3H9z" fill="#188" stroke="#188"/><path d="M10 10h1.500v1.500H10z" fill="#111"/>',
    ruler: '<path d="M3.500 1v10M3.500 1.500h6v9h-6M7 3.500h2M6 5.500h3M7 7.500h2M1 10.500h10"/>',
    gridd: '<path d="M1 3h9M1 6h9M1 9h9M3 1v10M6 1v10M9 1v9" stroke-width="1.500"/>',
    heart: '<path d="M6 10.500C0 6 1.500 2 4 2c1.500 0 2 1.500 2 1.500S6.500 2 8 2c2.500 0 4 4-2 8.500z" fill="#e81010" stroke="none"/>',
    dot: '<path d="M5 3.500h3v2H5z"/>',
    line1: '<path d="M1 8.500h10"/>',
    line2: '<path d="M1 6.500h10M1 9.500h10"/>',
    frac: '<path d="M1.500 6V1.500H5M2 3.500h2M5 7.500h3v3M9 5v4h2M6 4h3"/>',
    dimh: '<path d="M1.500 2v8M10.500 2v8M2 6h8M4 4.500L2 6l2 1.500M8 4.500L10 6 8 7.500"/>',
    dimv: '<path d="M3 1.500h7M3 10.500h7M6.500 2v8M5 4l1.500-2L8 4M5 8l1.500 2L8 8"/>',
    dimd: '<path d="M1 5l4-4 6 7M3 3l6 5M9 10l2-2-1-2"/>',
    dima: '<path d="M1 10.500h10M2.500 11V2l7 8M1 2.500h3c4 1 5 4 5 7"/>',
    leader: '<path d="M1 10l4-4h3l2-4 1 4M1 8v2h2M9 4.500h2"/>',
    dimr: '<path d="M1.500 4.500h6v6h-6zM9.500 3v8M1 1.500h7M8 6.500h3M3 6h3"/>',
    p1: '<path d="M6 1v9M1 9.500h10M3 5.500h5M8 4l2 2M2 8v3"/>',
    p2: '<path d="M1 3.500h5v6M5 6.500h5M6 3.500h5M9 1.500l2 2-2 1"/>',
    lobe: '<path d="M3 2.500c8-3 8 2 6 3s0 5-6 5L5 8 3 5z"/><path d="M8 7h2"/>',
    grad: '<path d="M1 1h4v10H1z" fill="#000050"/><path d="M5 1h3v10H5z" fill="#8a8a60" stroke="none"/><path d="M8 1h3v10H8z" fill="#ddc"/>',
    sq: '<path d="M1 1h9v8H1z" fill="currentColor"/><path d="M10 11h2"/>',
    cut2: '<path d="M1 8.500h10M3 5.500h7M3 2v6M3 2.500l6 3v5M1 10.500h4"/>',
    mirror2: '<path d="M3 4.500l5-3v9H5v-6z"/>',
    list: '<path d="M1.500 1.500h9v9h-9zM1 4.500h10M1 7.500h10" stroke-width="1.500"/>',
    erase: '<path d="M2 5l3-3h6L8 5zM2 5h6v3H2z" fill="currentColor"/><path d="M3 10.500h8"/>',
    spin: '<path d="M4 4.500L6 2l2 2.500zM4 7.500L6 10l2-2.500z" fill="currentColor" stroke="none"/>',
    layers: '<path d="M3 4.500h7l-2 2H2zM2 8.500h6l2-2M2 10.500h6l2-2"/><path d="M1 1l3 3M4 1L1 4" stroke="#cc2"/>',
    layercur: '<path d="M2 4.500h9M1 6.500h9M1 8.500h9M1 10.500h9"/><path d="M4 0v8l2-2 4 1z" fill="#111"/>',
    plus: '<path d="M.5.500h11v11H.5z" stroke="#777"/><path d="M3 6h6M6 3v6" stroke-width="1.500"/>',
    eye: '<path d="M1 6c3-4 7-4 10 0-3 4-7 4-10 0z" stroke-width="1.500"/><circle cx="6" cy="6" r="2" fill="#222"/>',
    lock: '<path d="M2.500 5.500h6v5h-6zM6.500 5V2.500h3V5M5 7v2"/>',
    corner: '<path d="M1 9.500h10M2 9l7-6"/>',
    up: '<path d="M4 7l2-2 2 2" stroke-width="1.500"/>',
    down: '<path d="M4 5l2 2 2-2" stroke-width="1.500"/>',
    lt: '<path d="M7 4L5 6l2 2" stroke-width="1.500"/>',
    gt: '<path d="M5 4l2 2-2 2" stroke-width="1.500"/>',
    palette: '<path d="M1 5c0-5 10-5 10 0 0 3-3 2-4 3s-1 3-3 2-3-2-3-5z" fill="#5c8020" stroke="#532"/><path d="M3 4h1M6 3h1" stroke="#d22" stroke-width="2"/><path d="M8 5h1" stroke="#dd2" stroke-width="2"/>',
    rainbow: '<path d="M1 2l3-1h7v7l-3 3H1z" fill="#fff" stroke="none"/><path d="M1 5.500V3l3-2h4L6 3.500z" fill="#d22" stroke="none"/><path d="M8 1h3v2L8 4z" fill="#dd2" stroke="none"/><path d="M11 3v4l-3 1V5z" fill="#2a4" stroke="none"/><path d="M1 8l5-3 2 1-2 3-5 1z" fill="#c2489a" stroke="none"/><path d="M1 11v-1l6-2 2 1-1 2z" fill="#22c" stroke="none"/>',
    cmyk: '<path d="M6 6V0a6 6 0 0 0-6 6z" fill="#ff0" stroke="none"/><path d="M6 6V0a6 6 0 0 1 6 6z" fill="#f0c" stroke="none"/><path d="M6 6H0a6 6 0 0 0 6 6z" fill="#0df" stroke="none"/><path d="M6 6h6a6 6 0 0 1-6 6z" fill="#000" stroke="none"/>',
    tcur: '<path d="M1 2h3" stroke="#c22" stroke-width="2"/><path d="M4 2h4" stroke="#2a2" stroke-width="2"/><path d="M8 2h3" stroke="#cc2" stroke-width="2"/><path d="M4 3v7l2-2 1 3h1L7 7h2z" fill="#111"/>',
    refresh: '<path d="M3 6V3.500h5M6.500 1.500l2 2-2 2M9 6v2.500H4M5.500 6.500l-2 2 2 2"/>',
    cross2: '<path d="M6 2v8M2 6h8"/>',
    dots9: '<path d="M2 2.500h8M2 5.500h8M2 8.500h8" stroke-dasharray="1 2" stroke-width="1.500"/>',
    man: '<path d="M3 2h5M6 2v3M3 5.500h6M6 5L3 10M6 5l3 5M3 7l1-1"/>',
    people: '<circle cx="8" cy="3.500" r="2"/><circle cx="4" cy="6.500" r="1.500"/><path d="M5.500 7.500L8 5.500l3 3M1 11.500l3-3 2 3"/>',
    caret: '<path d="M2.500 7.500L6 4l3.500 3.500"/>',
    wifi: '<path d="M1 11C1 5 5 2 11 2M3.500 11c0-4 3-6 7.500-6M6 11c0-2 2-3 5-3M8.500 11l2-1"/>',
    volume: '<path d="M1 4.500h2l3-3v9l-3-3H1zM7.500 4c1 1 1 3 0 4M9 2.500c2 2 2 5 0 7M10.500 1c2 3 2 7 0 10"/>',
    note: '<path d="M1 1.500h10v7H7.500v2l-2-2H1z"/>',
    windows: '<path d="M0 2l5-.7V5.700H0zM6 1.200L12 .3v5.400H6zM0 6.500h5v4.300L0 10zM6 6.500h6v5.300L6 11z" fill="#fff" stroke="none"/>',
    search: '<circle cx="7.500" cy="4.500" r="3"/><path d="M5.500 7L2 10.500"/>',
    taskview: '<path d="M1.500 4.500h6v4h-6zM1 2.500h7M1 10.500h7M10 1v3M10 6v5" />',
    edge: '<path d="M1.500 6C2 0 10-.5 10.500 6H4M3.500 5.500c-1 5 4 6 7 4" stroke="#1a86e0" stroke-width="2.200"/>',
    explorer: '<path d="M.5 2h4l1 1h6v7H.5z" fill="#f5d67c" stroke="none"/><path d="M2 7h8v4H8V9H4v2H2z" fill="#4aa8d8" stroke="none"/>',
    card: '<path d="M.5 2h11v8H.5z" fill="#7cc8ee" stroke="none"/><circle cx="3.500" cy="5" r="1.500" fill="#1468b0" stroke="none"/><path d="M6 4.500h4M6 6.500h4M2 8.500h8" stroke="#1468b0"/>',
    chrome: '<circle cx="6" cy="6" r="5.500" fill="#f2c530" stroke="none"/><path d="M6 6L1.200 3.300A5.500 5.500 0 0 1 11 3.500z" fill="#dd4b3e" stroke="none"/><path d="M6 6L1.200 3.300A5.500 5.500 0 0 0 5.500 11.500L8 7z" fill="#2ba24c" stroke="none"/><circle cx="6" cy="6" r="2.500" fill="#4285f4" stroke="#fff"/>',
    notes: '<path d="M4 1h7L9 10H1z" fill="#7fc4d0" stroke="#d8eef2"/><path d="M4 4h4M3.500 6h4" stroke="#d8eef2"/>',
    calc: '<path d="M1.500 0h9v12h-9z" fill="#fff" stroke="none"/><path d="M3 2h6" stroke="#111" stroke-width="1.500"/><path d="M3 5h6M3 7.500h6M3 10h6" stroke="#111" stroke-dasharray="1.200 1.200"/>',
    paintapp: '<ellipse cx="5.500" cy="7" rx="5" ry="4" fill="#d8e2ec" stroke="none"/><path d="M11 0L6 7" stroke="#c98028" stroke-width="1.500"/><path d="M2 6h2" stroke="#d33" stroke-width="2"/><path d="M4 9h2" stroke="#2a6" stroke-width="2"/><path d="M7 8h2" stroke="#26c" stroke-width="2"/>',
    firefox: '<circle cx="6" cy="6.500" r="5" fill="#f4701e" stroke="none"/><path d="M6 1c5 0 6 4 5 7 0-3-2-4-4-4z" fill="#ffcf30" stroke="none"/><circle cx="6" cy="7" r="2.500" fill="#6a3ab8" stroke="none"/>',
    pc: '<path d="M4 1l7 1v6L4 7z" fill="#3c9ce8" stroke="#9cd"/><path d="M1 9l3-1 5 1-3 2z" fill="#ddd" stroke="none"/>',
    skype: '<circle cx="6" cy="6" r="5.500" fill="#12a5e8" stroke="none"/><path d="M8 4.200C7 2.500 4 3 4.300 4.800S8 6 7.800 7.600 4.500 9 4 7.500" stroke="#fff" stroke-width="1.300"/>',
    composer: '<use href="#omega" width="12" height="12" stroke="none"/>'
};

function svg(name) {
    return `<svg class="icon" viewBox="0 0 12 12">${icons[name]}</svg>`;
}

document.querySelectorAll('[data-icon]').forEach(el => {
    el.innerHTML = svg(el.dataset.icon);
});

// "-" disabled tool, "*" pressed tool, "|" space
document.querySelectorAll('[data-icons]').forEach(el => {
    el.innerHTML = el.dataset.icons.split(' ').map(item => {
        if (item === '|') return '<i class="space"></i>';
        const name = item.replace(/^[-*]/, '');
        const state = item[0] === '-' ? ' disabled' : item[0] === '*' ? ' class="active"' : '';
        return `<button aria-label="${name}"${state}>${svg(name)}</button>`;
    }).join('');
});

// palettes
const vinyl = '20242c 200808 ffffff 1c5850 0c6048 08804c 089070 009878 68a040 90e040 008090 50c8b8 38b0d8 0098e0 0888c8 085898 0858b0 103c98 082088 184088 183c78 082838 583c80 5028a0 503460 a078c0 a01050 701828 801030 903020 b02828 c80820 b02810 d03020 b03c48';
const process = 'fce83c cc0078 0098e0 000000 405030 006858 609890 008878 087858 009050 008868 009070 009480 98c050 70b8b8 0090a8 0090c8 0090c0 18a0d8 009898 c8e0f4 d8ecf8 d8e8f0 48a8e8 0098e0 0098e0 78a8d8 0080c0 0060a0 0080c0 0060a0 b8c8dc 4078a0 004888 006098';
const colors = '101010 ffffff 0a3018 0f4a45 1f6b62 005c3c 0a5c28 0a7a3c 009050 009a80 5c9a10 006a70 006a8a 007f90 0092a0 00a5a5 6cc5b0 a8d8e8 90d5d5 50b0dc 0a90c8 0080c0 3a78c0 0858a8 1a5298 084890 002c78 7088a0 405878 0c3058 082848 101c2c 0c1c58 443058 3c2878 c0b8c8 c098c8 a80850 b03080 884880 600820 700018 900018 a80818 b80010 c80010 d00808 c81c28 c83040 d83028 c01058 d85890 d87898 e07890 a85018 e85020 f06808 f88008 c84850 f08878 d8a040 f8a040 f0a010 f8b010 f8d000 f8e010 e8e070 e8dcb0 d8c8a8 b89070 887060 b8a898 886028 703020 502018 403028 282c30 484848 485868 788080 a8a8a8 d8d8d0 d8d0c8 e8dcc8 e8e4d8 f0f0e0 f8f8f8 e0e0d8 48a8e8 0868b0 101828 88c840 b81020';

function swatch(color, corner) {
    let mark = '';
    if (corner === 'bottom') mark = '<path d="M10 5v5H5z" fill="#fff"/><path d="M8 8h1v1H8z" fill="#000"/>';
    if (corner === 'top') mark = '<path d="M1 1h6L1 7z" fill="#fff"/><path d="M2 2h1v1H2zM4 2h1v1H4zM2 4h1v1H2z" fill="#000"/>';
    return `<div class="swatch"><svg viewBox="0 0 10 10"><path d="M0 0h10v10H0z" fill="#888"/><path d="M1 1h9v9H1z" fill="#${color}"/>${mark}</svg></div>`;
}
const none = '<div class="swatch"><svg viewBox="0 0 10 10"><path d="M0 0h10v10H0z" fill="#fff"/><path d="M0 3.500h10M0 7.500h10M3.500 0v10M7.500 0v10" stroke="#333" fill="none"/></svg></div>';

function fill(id, list, corner, before, after, first) {
    document.getElementById(id).innerHTML = `<span>${svg(before)}</span>${first}` +
        list.split(' ').map(c => swatch(c, corner)).join('') + `<span>${svg(after)}</span>`;
}
fill('vinyl', vinyl, 'bottom', 'up', 'down', none);
fill('process', process, '', 'up', 'down', none);
fill('colors', colors, 'top', 'lt', 'gt', '');

// rulers, 67 px = 3 inches
const inch = 67 / 3;
function drawRulers() {
    const h = document.getElementById('ruler-h');
    const v = document.getElementById('ruler-v');
    const width = h.clientWidth, height = v.clientHeight;
    let marks = '', labels = '';
    for (let q = -28; q <= 144; q++) {
        const x = Math.round(161 + q * inch / 4) + 0.5;
        if (x < 0 || x > width - 16) continue;
        const len = q % 8 === 0 ? 5 : q % 4 === 0 ? 4 : 2;
        marks += `M${x} 14v-${len}`;
        if (q % 8 === 0 && q / 4 < 36) labels += `<text x="${x}" y="7">${q / 4}</text>`;
    }
    labels += `<text x="${width - 18}" y="7">Inches</text>`;
    h.innerHTML = `<path d="${marks}"/><path class="edge" d="M0 15H${width}"/>${labels}`;

    marks = labels = '';
    for (let q = -24; q <= 64; q++) {
        const y = Math.round(342 - q * inch / 4) + 0.5;
        if (y < 0 || y > height - 12) continue;
        const len = q % 8 === 0 ? 5 : q % 4 === 0 ? 4 : 2;
        marks += `M15 ${y}h-${len}`;
        if (q % 8 === 0) labels += `<text transform="translate(9 ${y}) rotate(-90)">${Math.abs(q / 4)}</text>`;
    }
    v.innerHTML = `<path d="${marks}"/><path class="edge" d="M16 0V${height}"/>${labels}`;
}
drawRulers();
window.addEventListener('resize', drawRulers);

// taskbar
const tasks = ['windows', 'search', 'taskview', 'edge', 'explorer+', 'card', 'chrome+', 'notes', 'calc', 'paintapp+', 'firefox+', 'pc', 'skype+', 'composer+'];
document.getElementById('tasks').innerHTML = tasks.map(t => {
    const name = t.replace('+', '');
    const cls = (t.endsWith('+') ? 'open' : '') + (name === 'composer' ? ' current' : '');
    return `<button class="${cls}" aria-label="${name}">${svg(name)}</button>`;
}).join('');
```
